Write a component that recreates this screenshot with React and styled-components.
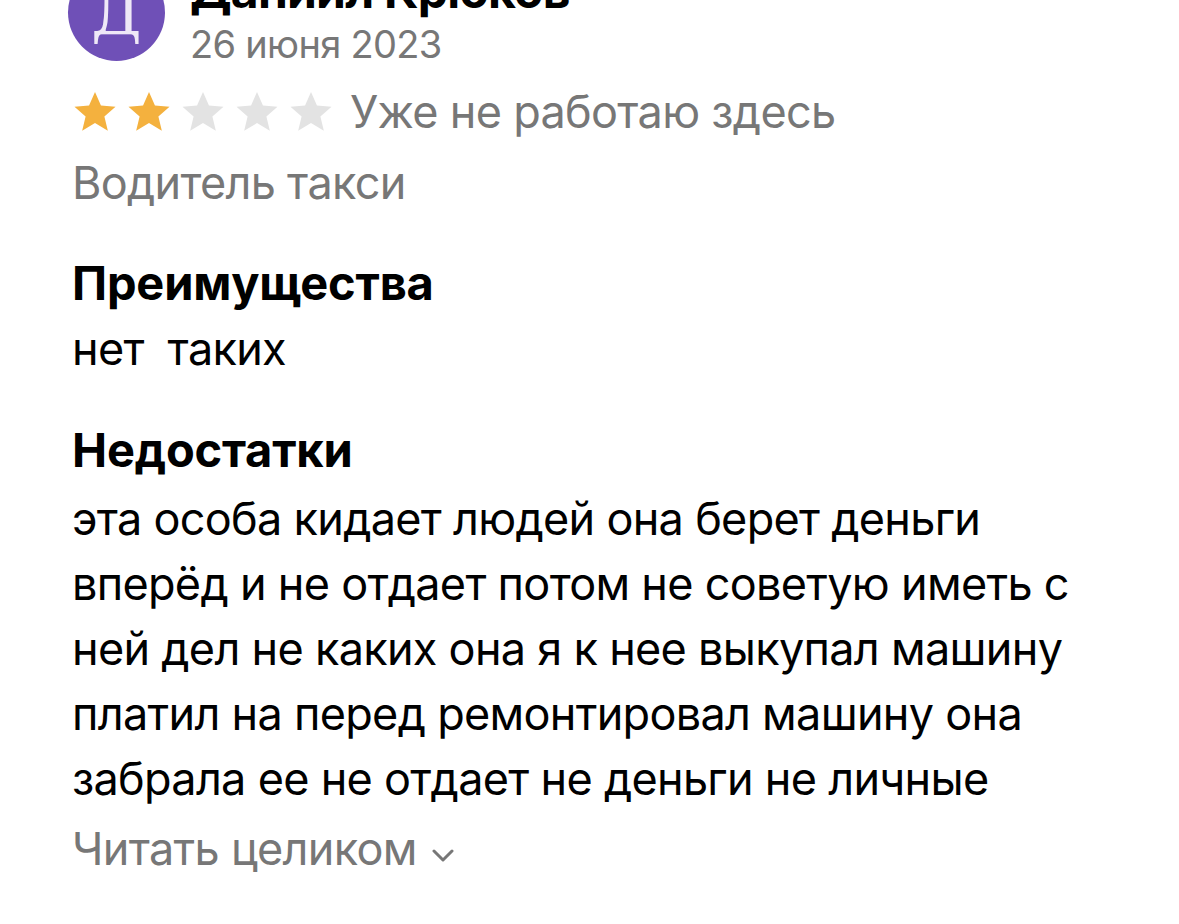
import styled, { createGlobalStyle } from "styled-components";

const GlobalStyle = createGlobalStyle`
  html, body {
    margin: 0;
    padding: 0;
    background: #fff;
    overflow: hidden;
  }
  body {
    font-family: Inter, "Noto Sans", sans-serif;
    color: #000;
  }
`

const Page = styled.div`
  width: 1179px;
  height: 924px;
  padding: 0 72px;
  box-sizing: border-box;
  overflow: hidden;
`

const Header = styled.div`
  display: flex;
  align-items: flex-start;
  gap: 25px;
  margin-top: -36px;
  margin-left: -4px;
`

const Avatar = styled.div`
  width: 97px;
  height: 97px;
  border-radius: 50%;
  background: #6f50b7;
  color: #efe8f7;
  display: flex;
  align-items: center;
  justify-content: center;
  font-family: "DejaVu Serif", "Liberation Serif", serif;
  font-size: 62px;
  font-weight: 300;
  flex-shrink: 0;
`

const Author = styled.div`
  display: flex;
  flex-direction: column;
`

const Name = styled.div`
  font-size: 48px;
  line-height: 56px;
  font-weight: 700;
  letter-spacing: -0.8px;
  margin-top: -1px;
  margin-bottom: 1px;
`

const Muted = styled.div`
  color: #777;
  font-size: ${p => p.$size || 45}px;
  line-height: ${p => p.$lh || 54}px;
  letter-spacing: -0.7px;
  margin-top: ${p => p.$mt || 0}px;
`

const Rating = styled.div`
  display: flex;
  align-items: center;
  margin-top: 17px;
`

const Stars = styled.div`
  display: flex;
  gap: 8px;
  margin-right: 16px;
`

const Star = styled.svg`
  width: 46px;
  height: 46px;
  fill: ${p => (p.$on ? "#f4b13e" : "#e3e3e3")};
`

const Heading = styled.div`
  font-size: 47px;
  line-height: 54px;
  font-weight: 700;
  letter-spacing: -0.2px;
  margin-top: ${p => p.$mt}px;
`

const Text = styled.div`
  font-size: 45px;
  line-height: 65px;
  letter-spacing: -0.7px;
  white-space: pre-wrap;
  margin-top: ${p => p.$mt || 0}px;
`

const More = styled.div`
  display: flex;
  align-items: center;
  gap: 15px;
  color: #777;
  font-size: 45px;
  line-height: 54px;
  letter-spacing: -0.7px;
  margin-top: 11px;
`

const Chevron = styled.svg`
  width: 22px;
  height: 14px;
  margin-top: 12px;
  stroke: #777;
  fill: none;
  stroke-width: 3;
  stroke-linecap: round;
  stroke-linejoin: round;
`

const body = [
  "эта особа кидает людей она берет деньги",
  "вперёд и не отдает потом не советую иметь с",
  "ней дел не каких она я к нее выкупал машину",
  "платил на перед ремонтировал машину она",
  "забрала ее не отдает не деньги не личные",
]

function StarIcon({ on }) {
  return (
    <Star $on={on} viewBox="0 0 24 24">
      <path d="M12 1.5l3.1 7.1 7.6.7-5.8 5 1.8 7.5L12 17.8l-6.7 4 1.8-7.5-5.8-5 7.6-.7z" />
    </Star>
  )
}

export default function App() {
  return (
    <Page>
      <GlobalStyle />
      <Header>
        <Avatar>Д</Avatar>
        <Author>
          <Name>Даниил Крюков</Name>
          <Muted $size={38} $lh={48}>26 июня 2023</Muted>
        </Author>
      </Header>
      <Rating>
        <Stars>
          {[1, 2, 3, 4, 5].map(i => <StarIcon key={i} on={i <= 2} />)}
        </Stars>
        <Muted>Уже не работаю здесь</Muted>
      </Rating>
      <Muted $mt={17}>Водитель такси</Muted>
      <Heading $mt={46}>Преимущества</Heading>
      <Text $mt={6}>нет  таких</Text>
      <Heading $mt={42}>Недостатки</Heading>
      <Text $mt={9}>
        {body.map((line, i) => <div key={i}>{line}</div>)}
      </Text>
      <More>
        Читать целиком
        <Chevron viewBox="0 0 22 14">
          <path d="M2 3l9 9 9-9" />
        </Chevron>
      </More>
    </Page>
  )
}
